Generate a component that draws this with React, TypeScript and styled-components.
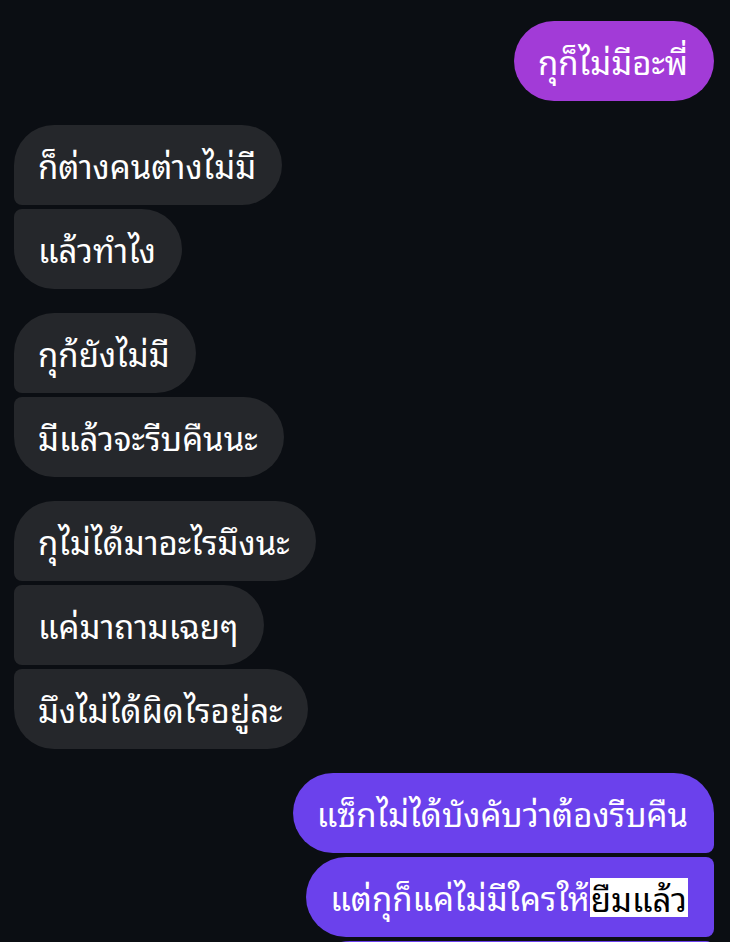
import styled, { createGlobalStyle, css } from "styled-components";

type Side = "in" | "out";
type Pos = "single" | "first" | "middle" | "last";

type Msg = {
  id: number;
  side: Side;
  pos: Pos;
  text: string;
  mark?: string;
  tone?: "pink" | "violet";
};

const messages: Msg[][] = [
  [{ id: 1, side: "out", pos: "single", text: "กุก็ไม่มีอะพี่", tone: "pink" }],
  [
    { id: 2, side: "in", pos: "first", text: "ก็ต่างคนต่างไม่มี" },
    { id: 3, side: "in", pos: "last", text: "แล้วทำไง" },
  ],
  [
    { id: 4, side: "in", pos: "first", text: "กุก้ยังไม่มี" },
    { id: 5, side: "in", pos: "last", text: "มีแล้วจะรีบคืนนะ" },
  ],
  [
    { id: 6, side: "in", pos: "first", text: "กุไม่ได้มาอะไรมึงนะ" },
    { id: 7, side: "in", pos: "middle", text: "แค่มาถามเฉยๆ" },
    { id: 8, side: "in", pos: "last", text: "มึงไม่ได้ผิดไรอยู่ละ" },
  ],
  [
    { id: 9, side: "out", pos: "first", text: "แซ็กไม่ได้บังคับว่าต้องรีบคืน", tone: "violet" },
    { id: 10, side: "out", pos: "middle", text: "แต่กุก็แค่ไม่มีใครให้", mark: "ยืมแล้ว", tone: "violet" },
    { id: 11, side: "out", pos: "middle", text: "\u00a0", tone: "violet" },
  ],
];

const GlobalStyle = createGlobalStyle`
  html, body {
    margin: 0;
    padding: 0;
    background: #0b0e13;
  }
  body {
    font-family: "Noto Sans Thai Looped", "Noto Serif Thai", "Loma", "Garuda", "Noto Sans", sans-serif;
    overflow: hidden;
  }
`;

const Thread = styled.div`
  display: flex;
  flex-direction: column;
  gap: 24px;
  padding: 21px 16px 0 14px;
  height: 942px;
  box-sizing: border-box;
  overflow: hidden;
`;

const Group = styled.div<{ $side: Side }>`
  display: flex;
  flex-direction: column;
  gap: 4px;
  align-items: ${(p) => (p.$side === "out" ? "flex-end" : "flex-start")};
`;

const BIG = 40;
const SMALL = 8;

const radius = (side: Side, pos: Pos) => {
  const top = pos === "single" || pos === "first" ? BIG : SMALL;
  const bottom = pos === "single" || pos === "last" ? BIG : SMALL;
  return side === "out"
    ? `${BIG}px ${top}px ${bottom}px ${BIG}px`
    : `${top}px ${BIG}px ${BIG}px ${bottom}px`;
};

const Bubble = styled.div<{ $side: Side; $pos: Pos; $tone?: string; $wide?: boolean }>`
  box-sizing: border-box;
  height: 80px;
  display: flex;
  align-items: center;
  padding: 0 26px 0 24px;
  font-size: 33px;
  font-weight: 400;
  line-height: 40px;
  color: #ffffff;
  white-space: nowrap;
  border-radius: ${(p) => radius(p.$side, p.$pos)};
  background: ${(p) =>
    p.$tone === "pink" ? "#a23bd7" : p.$tone === "violet" ? "#6b41ec" : "#25272b"};
  ${(p) =>
    p.$wide &&
    css`
      min-width: 404px;
    `}
`;

const Mark = styled.span`
  background: #ffffff;
  color: #000000;
  padding: 0 1px;
  line-height: 39px;
`;

export default function App() {
  return (
    <>
      <GlobalStyle />
      <Thread>
        {messages.map((group) => (
          <Group key={group[0].id} $side={group[0].side}>
            {group.map((m) => (
              <Bubble
                key={m.id}
                $side={m.side}
                $pos={m.pos}
                $tone={m.tone}
                $wide={m.text === "\u00a0"}
              >
                {m.text}
                {m.mark && <Mark>{m.mark}</Mark>}
              </Bubble>
            ))}
          </Group>
        ))}
      </Thread>
    </>
  );
}
